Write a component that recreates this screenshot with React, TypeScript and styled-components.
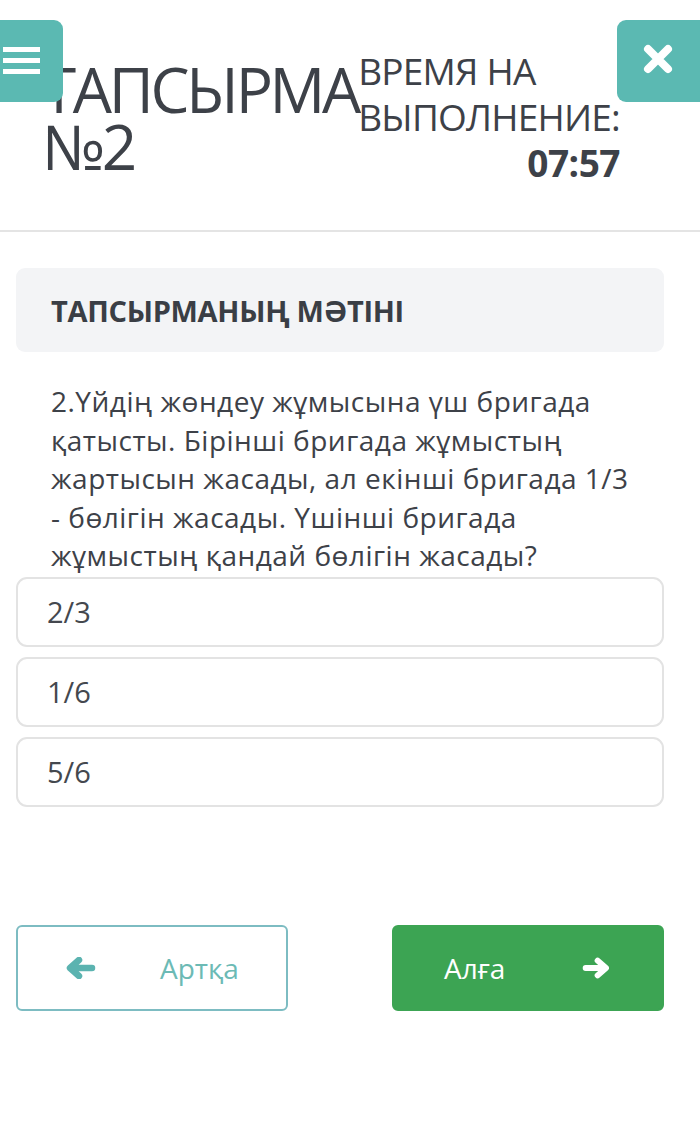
import styled, { createGlobalStyle } from "styled-components";

const GlobalStyle = createGlobalStyle`
  html, body {
    margin: 0;
    padding: 0;
    background: #ffffff;
  }
  body {
    font-family: "Open Sans", "Noto Sans", sans-serif;
    color: #3d4148;
  }
`;

const Page = styled.div`
  position: relative;
  width: 700px;
  min-height: 1133px;
  background: #fff;
`;

const CornerButton = styled.button<{ side: "left" | "right" }>`
  position: absolute;
  top: 20px;
  ${(p) => (p.side === "left" ? "left: 0;" : "right: 0;")}
  width: ${(p) => (p.side === "left" ? "63px" : "83px")};
  height: 82px;
  border: none;
  padding: 0;
  background: #5bb9b2;
  border-radius: ${(p) => (p.side === "left" ? "0 9px 9px 0" : "9px 0 0 9px")};
  display: flex;
  align-items: center;
  justify-content: center;
  z-index: 2;
`;

const Burger = styled.div`
  display: flex;
  flex-direction: column;
  gap: 6px;
  margin-left: -20px;
  margin-top: -2px;
  span {
    display: block;
    width: 37px;
    height: 5px;
    background: #fff;
  }
`;

const CloseWrap = styled.span`
  display: flex;
  margin: -4px 0 0 -2px;
`;

const Header = styled.header`
  display: flex;
  justify-content: space-between;
  align-items: flex-start;
  padding: 52px 80px 0 42px;
  height: 178px;
  border-bottom: 2px solid #e4e4e4;
`;

const Title = styled.h1`
  margin: 9px 0 0;
  font-weight: 400;
  font-size: 62px;
  line-height: 57px;
  letter-spacing: -3.3px;
  color: #3d4148;
`;

const Timer = styled.div`
  display: flex;
  flex-direction: column;
  margin: -4px 0 0;
  font-size: 37px;
  line-height: 46px;
  letter-spacing: -0.8px;
  color: #3d4148;
`;

const TimerValue = styled.div`
  align-self: flex-end;
  font-weight: 700;
  font-size: 37px;
  line-height: 46px;
  letter-spacing: -0.5px;
`;

const Content = styled.main`
  padding: 36px 36px 0 16px;
`;

const SectionHead = styled.div`
  background: #f3f4f6;
  border-radius: 9px;
  height: 84px;
  display: flex;
  align-items: center;
  padding-left: 35px;
  font-weight: 700;
  font-size: 29px;
  letter-spacing: -0.3px;
  color: #3a3e45;
`;

const Question = styled.p`
  margin: 30px 0 0;
  padding: 0 0 0 35px;
  font-size: 28px;
  line-height: 38.5px;
  letter-spacing: 0.5px;
  white-space: nowrap;
  color: #3d4148;
`;

const Options = styled.div`
  display: flex;
  flex-direction: column;
  gap: 10px;
  margin-top: 2px;
`;

const Option = styled.div`
  height: 66px;
  border: 2px solid #e3e3e3;
  border-radius: 11px;
  display: flex;
  align-items: center;
  padding-left: 29px;
  font-size: 29px;
  color: #44484e;
`;

const Nav = styled.div`
  display: flex;
  justify-content: space-between;
  margin-top: 118px;
`;

const NavButton = styled.button<{ primary?: boolean }>`
  width: 272px;
  height: 86px;
  box-sizing: border-box;
  border-radius: 6px;
  border: 2px solid ${(p) => (p.primary ? "#3ca453" : "#7dbcc2")};
  background: ${(p) => (p.primary ? "#3ca453" : "#fff")};
  color: ${(p) => (p.primary ? "#fff" : "#6cbab5")};
  font-family: "Open Sans", "Noto Sans", sans-serif;
  font-size: 28px;
  display: flex;
  align-items: center;
  padding: 0 ${(p) => (p.primary ? "52px 0 50px" : "0 0 48px")};
  gap: ${(p) => (p.primary ? "77px" : "64px")};
`;

const Arrow = ({ dir, color }: { dir: "left" | "right"; color: string }) => (
  <svg
    width="30"
    height="22"
    viewBox="0 0 30 22"
    style={{ transform: dir === "right" ? "scaleX(-1)" : undefined }}
  >
    <path
      d="M13 3 L4 11 L13 19 M5 11 H26"
      fill="none"
      stroke={color}
      strokeWidth="6.5"
      strokeLinecap="round"
      strokeLinejoin="round"
    />
  </svg>
);

const CloseIcon = () => (
  <svg width="30" height="30" viewBox="0 0 30 30">
    <path
      d="M5 5 L25 25 M25 5 L5 25"
      stroke="#fff"
      strokeWidth="8"
      strokeLinecap="round"
    />
  </svg>
);

const App = () => {
  return (
    <Page>
      <GlobalStyle />
      <CornerButton side="left" aria-label="menu">
        <Burger>
          <span />
          <span />
          <span />
        </Burger>
      </CornerButton>
      <CornerButton side="right" aria-label="close">
        <CloseWrap>
          <CloseIcon />
        </CloseWrap>
      </CornerButton>
      <Header>
        <Title>
          ТАПСЫРМА
          <br />
          №2
        </Title>
        <Timer>
          <span>ВРЕМЯ НА</span>
          <span>ВЫПОЛНЕНИЕ:</span>
          <TimerValue>07:57</TimerValue>
        </Timer>
      </Header>
      <Content>
        <SectionHead>ТАПСЫРМАНЫҢ МӘТІНІ</SectionHead>
        <Question>
          2.Үйдің жөндеу жұмысына үш бригада
          <br />
          қатысты. Бірінші бригада жұмыстың
          <br />
          жартысын жасады, ал екінші бригада 1/3
          <br />
          - бөлігін жасады. Үшінші бригада
          <br />
          жұмыстың қандай бөлігін жасады?
        </Question>
        <Options>
          <Option>2/3</Option>
          <Option>1/6</Option>
          <Option>5/6</Option>
        </Options>
        <Nav>
          <NavButton>
            <Arrow dir="left" color="#5bb3b0" />
            Артқа
          </NavButton>
          <NavButton primary>
            Алға
            <Arrow dir="right" color="#fff" />
          </NavButton>
        </Nav>
      </Content>
    </Page>
  );
};

export default App;
